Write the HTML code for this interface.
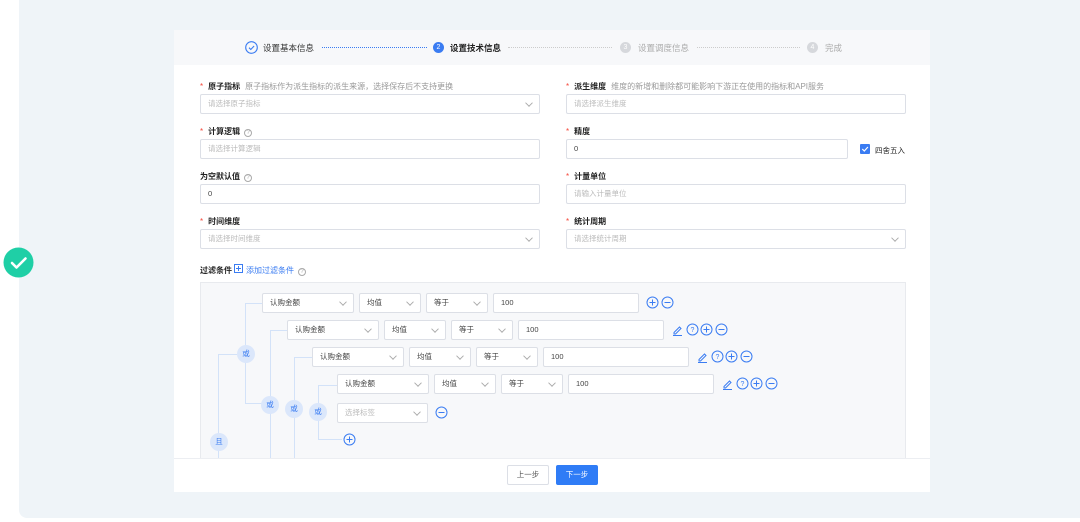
<!DOCTYPE html><html><head><meta charset="utf-8"><style>
*{margin:0;padding:0;box-sizing:border-box}
body{width:1080px;height:522px;background:#fff;position:relative;overflow:hidden;font-family:"Liberation Sans","Noto Sans CJK SC",sans-serif;font-size:8px;color:#333}
.a{position:absolute}
.panel{left:19px;top:-10px;width:1080px;height:528px;background:#eff4f8;border-radius:8px}
.card{left:174px;top:30px;width:756px;height:462px;background:#fff}
.hdr{left:174px;top:30px;width:756px;height:35px;background:#f7f8fa}
.lbl{font-size:8px;color:#222;white-space:nowrap}
.lbl b.t{font-weight:600}
.lbl i{color:#f5483b;font-style:normal;margin-right:5px}
.lbl span{color:#999;margin-left:5px}
.inp{height:20px;border:1px solid #dcdfe6;border-radius:2px;background:#fff;font-size:7.5px;color:#bbb;padding-left:7px;line-height:18px;white-space:nowrap}
.inp.v{color:#444}
.arr{position:absolute;right:7px;top:5px;width:6px;height:6px;border-right:1px solid #aaa;border-bottom:1px solid #aaa;transform:rotate(45deg) scale(.9)}
.q{display:inline-block;width:8px;height:8px;border:1px solid #aaa;border-radius:50%;font-size:6px;line-height:6px;text-align:center;color:#aaa;margin-left:4px;vertical-align:0;font-weight:normal}
.st{font-size:8.5px;white-space:nowrap}
.dot{border-top:1px dotted #3a7cf2;height:0}
.dotg{border-top:1px dotted #ccc;height:0}
.num{width:11px;height:11px;border-radius:50%;font-size:7px;color:#fff;text-align:center;line-height:11px}
.node{width:18px;height:18px;border-radius:50%;background:#dbe7fb;color:#3a7cf2;font-size:7.5px;text-align:center;line-height:18px}
.ln{background:#d3e2f8}
.btn{height:20px;border-radius:2px;font-size:7.5px;text-align:center;line-height:18px}
</style></head><body>
<div class="a panel"></div>
<svg class="a" style="left:3px;top:247px" width="31" height="31"><circle cx="15.5" cy="15.5" r="15" fill="#1fcfa6"/><path d="M9 16l4.5 4.5 9-9" stroke="#fff" stroke-width="2.6" fill="none" stroke-linecap="round" stroke-linejoin="round"/></svg>
<div class="a card"></div>
<div class="a hdr"></div>
<svg class="a" style="left:245px;top:41px" width="13" height="13"><circle cx="6.5" cy="6.5" r="5.8" fill="none" stroke="#3a7cf2" stroke-width="1.1"/><path d="M4 6.7l1.8 1.8 3.3-3.5" stroke="#3a7cf2" stroke-width="1.1" fill="none"/></svg>
<div class="a st" style="left:263px;top:42px">设置基本信息</div>
<div class="a dot" style="left:322px;top:47px;width:105px"></div>
<div class="a num" style="left:433px;top:42px;background:#3a7cf2">2</div>
<div class="a st" style="left:450px;top:42px;color:#222;font-weight:600">设置技术信息</div>
<div class="a dotg" style="left:508px;top:47px;width:104px"></div>
<div class="a num" style="left:620px;top:42px;background:#d6d8dc">3</div>
<div class="a st" style="left:638px;top:42px;color:#aaa">设置调度信息</div>
<div class="a dotg" style="left:697px;top:47px;width:103px"></div>
<div class="a num" style="left:807px;top:42px;background:#d6d8dc">4</div>
<div class="a st" style="left:825px;top:42px;color:#aaa">完成</div>
<div class="a lbl" style="left:200px;top:81px"><i>*</i><b class="t">原子指标</b><span>原子指标作为派生指标的派生来源，选择保存后不支持更换</span></div>
<div class="a inp" style="left:200px;top:94px;width:340px">请选择原子指标<b class="arr"></b></div>
<div class="a lbl" style="left:566px;top:81px"><i>*</i><b class="t">派生维度</b><span>维度的新增和删除都可能影响下游正在使用的指标和API服务</span></div>
<div class="a inp" style="left:566px;top:94px;width:340px">请选择派生维度</div>
<div class="a lbl" style="left:200px;top:126px"><i>*</i><b class="t">计算逻辑</b><b class="q">?</b></div>
<div class="a inp" style="left:200px;top:139px;width:340px">请选择计算逻辑</div>
<div class="a lbl" style="left:566px;top:126px"><i>*</i><b class="t">精度</b></div>
<div class="a inp v" style="left:566px;top:139px;width:282px">0</div>
<svg class="a" style="left:860px;top:144px" width="10" height="10"><rect width="10" height="10" rx="1" fill="#3a7cf2"/><path d="M2.3 5l2 2 3.6-4" stroke="#fff" stroke-width="1.2" fill="none"/></svg>
<div class="a lbl" style="left:875px;top:145px;font-size:7.5px">四舍五入</div>
<div class="a lbl" style="left:200px;top:171px"><b class="t">为空默认值</b><b class="q">?</b></div>
<div class="a inp v" style="left:200px;top:184px;width:340px">0</div>
<div class="a lbl" style="left:566px;top:171px"><i>*</i><b class="t">计量单位</b></div>
<div class="a inp" style="left:566px;top:184px;width:340px">请输入计量单位</div>
<div class="a lbl" style="left:200px;top:216px"><i>*</i><b class="t">时间维度</b></div>
<div class="a inp" style="left:200px;top:229px;width:340px">请选择时间维度<b class="arr"></b></div>
<div class="a lbl" style="left:566px;top:216px"><i>*</i><b class="t">统计周期</b></div>
<div class="a inp" style="left:566px;top:229px;width:340px">请选择统计周期<b class="arr"></b></div>
<div class="a lbl" style="left:200px;top:265px"><b class="t">过滤条件</b></div>
<svg class="a" style="left:234px;top:264px" width="9" height="9"><rect x=".5" y=".5" width="8" height="8" fill="none" stroke="#3a7cf2"/><path d="M4.5 2v5M2 4.5h5" stroke="#3a7cf2"/></svg>
<div class="a lbl" style="left:246px;top:265px;color:#3a7cf2">添加过滤条件<b class="q">?</b></div>
<div class="a" style="left:200px;top:282px;width:706px;height:176px;background:#f7f8fa;border:1px solid #e8eaee;border-bottom:none"></div>
<div class="a ln" style="left:218px;top:354px;width:1px;height:104px"></div>
<div class="a ln" style="left:218px;top:354px;width:19px;height:1px"></div>
<div class="a ln" style="left:245px;top:303px;width:1px;height:100px"></div>
<div class="a ln" style="left:245px;top:303px;width:17px;height:1px"></div>
<div class="a ln" style="left:245px;top:403px;width:17px;height:1px"></div>
<div class="a ln" style="left:270px;top:330px;width:1px;height:128px"></div>
<div class="a ln" style="left:270px;top:330px;width:17px;height:1px"></div>
<div class="a ln" style="left:294px;top:357px;width:1px;height:101px"></div>
<div class="a ln" style="left:294px;top:357px;width:18px;height:1px"></div>
<div class="a ln" style="left:318px;top:385px;width:1px;height:54px"></div>
<div class="a ln" style="left:318px;top:385px;width:19px;height:1px"></div>
<div class="a ln" style="left:318px;top:439px;width:24px;height:1px"></div>
<div class="a node" style="left:237px;top:345px">或</div>
<div class="a node" style="left:261px;top:396px">或</div>
<div class="a node" style="left:285px;top:400px">或</div>
<div class="a node" style="left:309px;top:403px">或</div>
<div class="a node" style="left:210px;top:433px">且</div>
<div id="rows"></div>
<div class="a inp" style="left:337px;top:403px;width:91px">选择标签<b class="arr"></b></div>
<svg class="a" style="left:435px;top:406px" width="13" height="13"><circle cx="6.5" cy="6.5" r="5.5" fill="none" stroke="#3a7cf2"/><path d="M3.5 6.5h6" stroke="#3a7cf2"/></svg>
<svg class="a" style="left:343px;top:433px" width="13" height="13"><circle cx="6.5" cy="6.5" r="5.5" fill="none" stroke="#3a7cf2"/><path d="M3.5 6.5h6M6.5 3.5v6" stroke="#3a7cf2"/></svg>
<div class="a" style="left:174px;top:458px;width:756px;height:1px;background:#eceef2"></div>
<div class="a btn" style="left:507px;top:465px;width:42px;border:1px solid #dcdfe6;color:#555;background:#fff">上一步</div>
<div class="a btn" style="left:556px;top:465px;width:42px;background:#2f7cf6;color:#fff;border:1px solid #2f7cf6">下一步</div>
<script>
var h='';
for(var i=0;i<4;i++){var x=262+25*i,y=293+27*i;
h+='<div class="a inp v" style="left:'+x+'px;top:'+y+'px;width:92px">认购金额<b class="arr"></b></div>';
h+='<div class="a inp v" style="left:'+(x+97)+'px;top:'+y+'px;width:62px">均值<b class="arr"></b></div>';
h+='<div class="a inp v" style="left:'+(x+164)+'px;top:'+y+'px;width:62px">等于<b class="arr"></b></div>';
h+='<div class="a inp v" style="left:'+(x+231)+'px;top:'+y+'px;width:146px">100</div>';
var ix=x+384,icons=[];
if(i>0)icons=['e','q','p','m'];else icons=['p','m'];
icons.forEach(function(t,k){var s='<svg class="a" style="left:'+(ix+k*14.5)+'px;top:'+(y+3)+'px" width="13" height="13">';
if(t=='e')s+='<path d="M3 9.5l5.5-5.5 1.5 1.5-5.5 5.5H3z" fill="none" stroke="#3a7cf2"/><path d="M2 12.5h9" stroke="#3a7cf2"/>';
else{s+='<circle cx="6.5" cy="6.5" r="5.5" fill="none" stroke="#3a7cf2"/>';
if(t=='q')s+='<text x="6.5" y="9" font-size="7" text-anchor="middle" fill="#3a7cf2" font-family="Liberation Sans">?</text>';
if(t=='p')s+='<path d="M3.5 6.5h6M6.5 3.5v6" stroke="#3a7cf2"/>';
if(t=='m')s+='<path d="M3.5 6.5h6" stroke="#3a7cf2"/>';}
h+=s+'</svg>';});}
document.getElementById('rows').innerHTML=h;
</script>
</body></html>
